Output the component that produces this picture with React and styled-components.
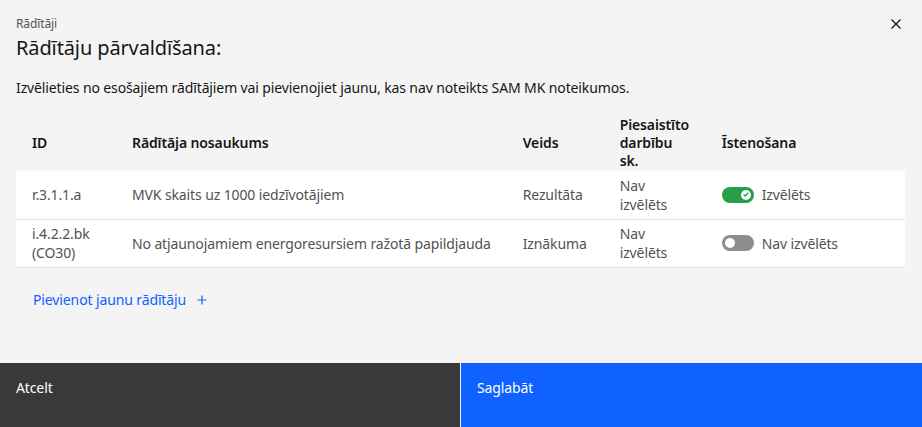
import React, { useState } from "react";
import styled, { createGlobalStyle } from "styled-components";

const GlobalStyle = createGlobalStyle`
  html, body { margin: 0; padding: 0; }
  body {
    font-family: "Noto Sans", "Open Sans", sans-serif;
    background: #f4f4f4;
    color: #161616;
    letter-spacing: -0.12px;
  }
  * { box-sizing: border-box; }
`;

const rows = [
  {
    id: "r.3.1.1.a",
    name: "MVK skaits uz 1000 iedzīvotājiem",
    type: "Rezultāta",
    linked: "Nav izvēlēts",
    on: true
  },
  {
    id: "i.4.2.2.bk (CO30)",
    name: "No atjaunojamiem energoresursiem ražotā papildjauda",
    type: "Iznākuma",
    linked: "Nav izvēlēts",
    on: false
  }
];

export default function App() {
  const [items, setItems] = useState(rows);

  const toggle = i => {
    setItems(items.map((r, j) => (j === i ? { ...r, on: !r.on } : r)));
  };

  return (
    <Modal>
      <GlobalStyle />
      <Header>
        <Label>Rādītāji</Label>
        <Title>Rādītāju pārvaldīšana:</Title>
        <Close aria-label="close">
          <svg width="16" height="16" viewBox="0 0 16 16">
            <path d="M3.5 3.5 L12.5 12.5 M12.5 3.5 L3.5 12.5" stroke="#161616" strokeWidth="1.4" />
          </svg>
        </Close>
      </Header>
      <Body>
        <Description>
          Izvēlieties no esošajiem rādītājiem vai pievienojiet jaunu, kas nav noteikts SAM MK noteikumos.
        </Description>
        <Table>
          <thead>
            <tr>
              <Th $w="100px">ID</Th>
              <Th $w="390px">Rādītāja nosaukums</Th>
              <Th $w="97px">Veids</Th>
              <Th $w="102px">Piesaistīto darbību sk.</Th>
              <Th>Īstenošana</Th>
            </tr>
          </thead>
          <tbody>
            {items.map((r, i) => (
              <Tr key={r.id}>
                <Td>{r.id}</Td>
                <Td $nowrap>{r.name}</Td>
                <Td>{r.type}</Td>
                <Td>{r.linked}</Td>
                <Td>
                  <ToggleWrap onClick={() => toggle(i)}>
                    <Track $on={r.on}>
                      <Knob $on={r.on}>
                        {r.on && (
                          <svg width="6" height="5" viewBox="0 0 6 5">
                            <path d="M0.6 2.4 L2.3 4 L5.4 0.8" stroke="#24a148" strokeWidth="1.3" fill="none" />
                          </svg>
                        )}
                      </Knob>
                    </Track>
                    <ToggleText>{r.on ? "Izvēlēts" : "Nav izvēlēts"}</ToggleText>
                  </ToggleWrap>
                </Td>
              </Tr>
            ))}
          </tbody>
        </Table>
        <AddLink href="#">
          Pievienot jaunu rādītāju
          <svg width="12" height="12" viewBox="0 0 12 12">
            <path d="M6 1.5 V10.5 M1.5 6 H10.5" stroke="#0f62fe" strokeWidth="1.2" />
          </svg>
        </AddLink>
      </Body>
      <Footer>
        <FooterButton $kind="secondary">Atcelt</FooterButton>
        <FooterButton $kind="primary">Saglabāt</FooterButton>
      </Footer>
    </Modal>
  );
}

const Modal = styled.div`
  display: flex;
  flex-direction: column;
  width: 922px;
  height: 427px;
  background: #f4f4f4;
`;

const Header = styled.header`
  position: relative;
  padding: 16px 48px 0 16px;
`;

const Label = styled.div`
  font-size: 12px;
  line-height: 16px;
  color: #525252;
`;

const Title = styled.h2`
  margin: 2px 0 0;
  font-size: 20px;
  font-weight: 400;
  line-height: 28px;
  color: #161616;
`;

const Close = styled.button`
  position: absolute;
  top: 16px;
  right: 18px;
  width: 16px;
  height: 16px;
  padding: 0;
  border: none;
  background: none;
  display: flex;
`;

const Body = styled.div`
  flex: 1;
  padding: 0 17px 0 16px;
`;

const Description = styled.p`
  margin: 16px 0 0;
  font-size: 14px;
  line-height: 20px;
  color: #161616;
`;

const Table = styled.table`
  width: 100%;
  margin-top: 17px;
  border-collapse: collapse;
  font-size: 14px;
  line-height: 19px;
`;

const Th = styled.th`
  width: ${p => p.$w || "auto"};
  padding: 0 16px;
  height: 56px;
  text-align: left;
  font-weight: 600;
  line-height: 18px;
  color: #161616;
  vertical-align: middle;
`;

const Tr = styled.tr`
  background: #ffffff;
  border-bottom: 1px solid #e0e0e0;
`;

const Td = styled.td`
  padding: 4px 16px;
  height: 48px;
  color: #525252;
  vertical-align: middle;
  white-space: ${p => (p.$nowrap ? "nowrap" : "normal")};
`;

const ToggleWrap = styled.div`
  display: flex;
  align-items: center;
  gap: 8px;
  cursor: pointer;
`;

const Track = styled.span`
  position: relative;
  width: 32px;
  height: 16px;
  border-radius: 8px;
  background: ${p => (p.$on ? "#24a148" : "#8d8d8d")};
`;

const Knob = styled.span`
  position: absolute;
  top: 3px;
  left: ${p => (p.$on ? "19px" : "3px")};
  width: 10px;
  height: 10px;
  border-radius: 50%;
  background: #ffffff;
  display: flex;
  align-items: center;
  justify-content: center;
`;

const ToggleText = styled.span`
  color: #525252;
`;

const AddLink = styled.a`
  display: inline-flex;
  align-items: center;
  gap: 10px;
  margin: 23px 0 0 17px;
  font-size: 14px;
  line-height: 18px;
  color: #0f62fe;
  text-decoration: none;
`;

const Footer = styled.footer`
  display: flex;
  gap: 1px;
  height: 64px;
`;

const FooterButton = styled.button`
  flex: ${p => (p.$kind === "primary" ? "1" : "0 0 460px")};
  border: none;
  padding: 16px 16px;
  text-align: left;
  align-self: stretch;
  display: flex;
  align-items: flex-start;
  font-family: inherit;
  font-size: 14px;
  line-height: 18px;
  letter-spacing: inherit;
  color: #ffffff;
  background: ${p => (p.$kind === "primary" ? "#0f62fe" : "#393939")};
`;
